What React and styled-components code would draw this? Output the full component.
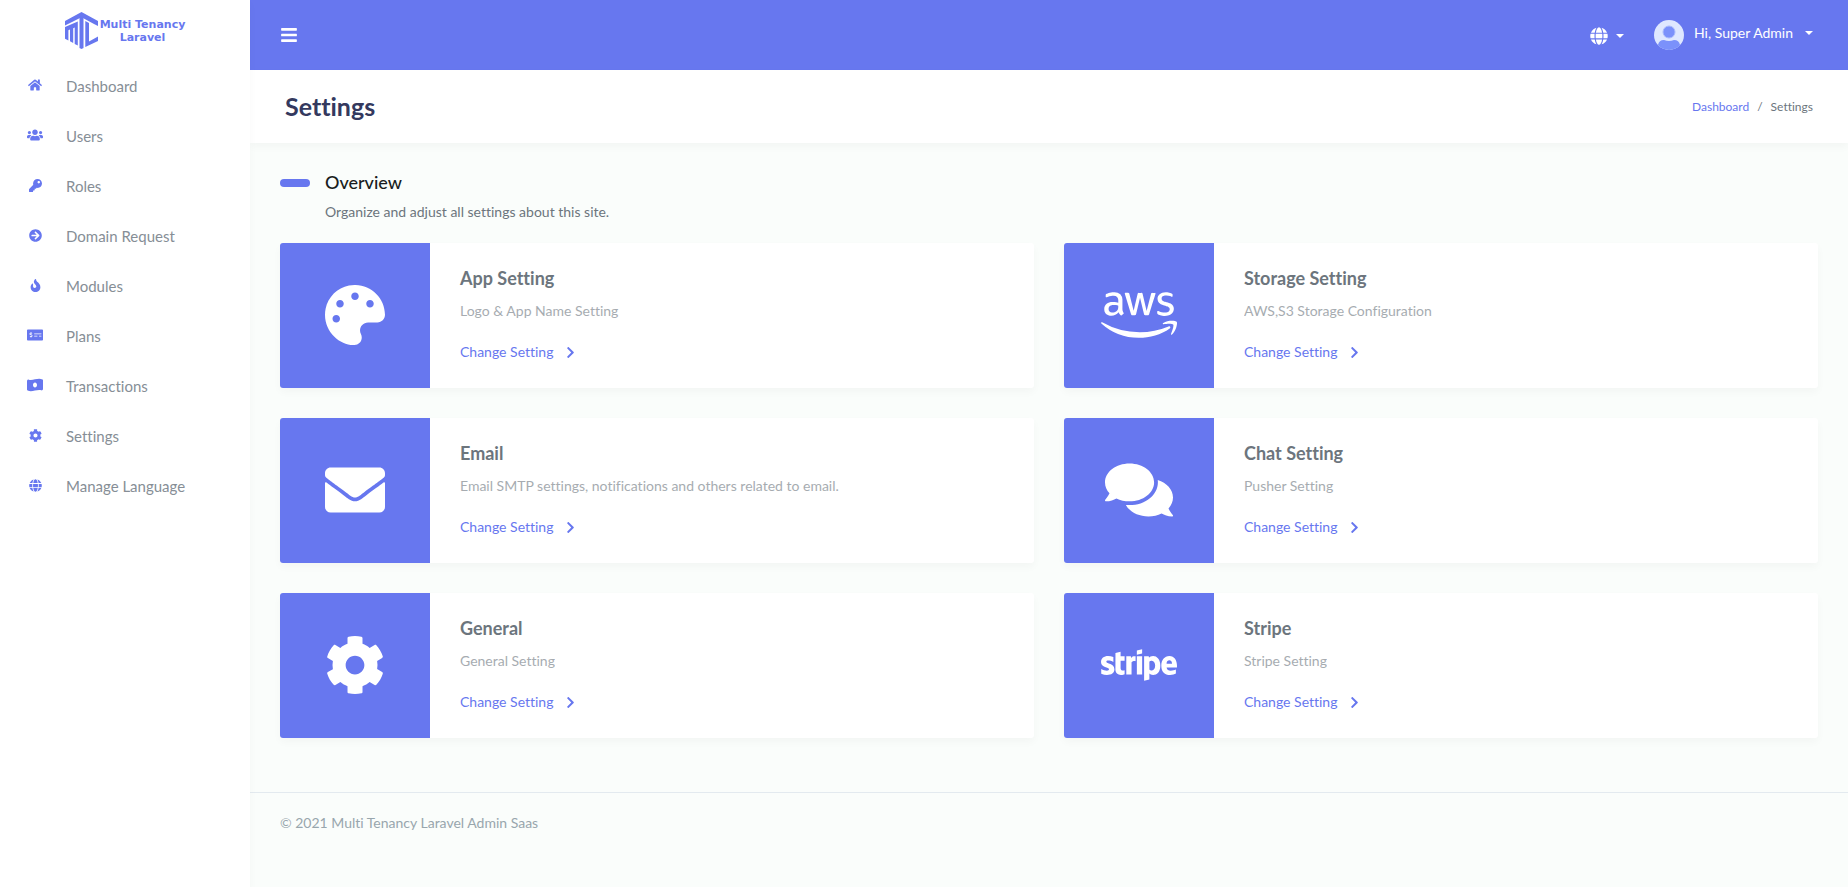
import React from "react";
import styled, { createGlobalStyle } from "styled-components";
import {
  FaHome, FaUsers, FaKey, FaArrowCircleRight, FaFire, FaMoneyCheckAlt,
  FaCog, FaGlobe, FaBars, FaPalette, FaAws, FaEnvelope, FaComments, FaStripe, FaChevronRight,
} from "react-icons/fa";

const primary = "#6777ef";

const GlobalStyle = createGlobalStyle`
  *, *::before, *::after { box-sizing: border-box; }
  body {
    margin: 0;
    background: #fafdfb;
    color: #6c757d;
    font-family: Lato, "Open Sans", sans-serif;
    font-size: 14px;
    font-variant-ligatures: none;
    line-height: 24px;
  }
  a { color: ${primary}; text-decoration: none; }
  h1, h2, h3, p, ul, ol { margin: 0; padding: 0; }
  ul, ol { list-style: none; }
  svg { display: block; flex-shrink: 0; }
  button { border: 0; padding: 0; background: none; font: inherit; font-variant-ligatures: none; cursor: pointer; }
`;

const Shell = styled.div`
  display: flex;
  min-height: 100vh;
`;

const Sidebar = styled.aside`
  position: relative;
  z-index: 2;
  flex: 0 0 250px;
  background: #fff;
  box-shadow: 0 4px 8px rgba(0, 0, 0, 0.03);
`;

const Brand = styled.a`
  display: flex;
  justify-content: center;
  gap: 2px;
  height: 61px;
  padding: 12px 0 0;
`;

const BrandName = styled.span`
  padding-top: 6px;
  font: bold 11px/13px "DejaVu Sans", sans-serif;
  text-align: center;
`;

const MenuLink = styled.a`
  display: flex;
  align-items: center;
  height: 50px;
  padding: 0 20px;
  gap: 16px;
  color: #868e96;
  font-size: 15px;
`;

const MenuIcon = styled.span`
  display: flex;
  justify-content: center;
  width: 30px;
  padding-bottom: 2px;
  color: ${primary};
`;

const Main = styled.div`
  flex: 1;
  min-width: 0;
`;

const Navbar = styled.header`
  display: flex;
  align-items: center;
  justify-content: space-between;
  height: 70px;
  padding: 0 35px 0 30px;
  background: ${primary};
  color: #fff;
`;

const NavButton = styled.button`
  display: flex;
  align-items: center;
  gap: 8px;
  color: #fff;
`;

const NavActions = styled.div`
  display: flex;
  align-items: center;
  gap: 30px;
`;

const LanguageButton = styled(NavButton)`
  padding-top: 2px;
`;

const Caret = styled.span`
  border-top: 4px solid currentColor;
  border-left: 4px solid transparent;
  border-right: 4px solid transparent;
`;

const UserLabel = styled.span`
  display: flex;
  align-items: center;
  gap: 12px;
  padding: 0 0 4px 2px;
`;

const TitleBar = styled.div`
  display: flex;
  align-items: center;
  justify-content: space-between;
  padding: 20px 35px;
  background: #fff;
  box-shadow: 0 4px 8px rgba(0, 0, 0, 0.03);
`;

const PageTitle = styled.h1`
  color: #34395e;
  font-size: 25px;
  line-height: 33px;
`;

const Crumbs = styled.ol`
  display: flex;
  gap: 8px;
  font-size: 12px;
`;

const Content = styled.main`
  padding: 28px 30px 54px;
`;

const SectionTitle = styled.h2`
  display: flex;
  align-items: center;
  gap: 15px;
  color: #191d21;
  font-size: 18px;
  font-weight: 500;
  line-height: 23px;

  &::before {
    content: "";
    width: 30px;
    height: 8px;
    border-radius: 5px;
    background: ${primary};
  }
`;

const SectionLead = styled.p`
  padding: 6px 0 19px 45px;
`;

const CardGrid = styled.div`
  display: grid;
  grid-template-columns: 1fr 1fr;
  gap: 30px;
`;

const Card = styled.article`
  display: flex;
  min-height: 145px;
  overflow: hidden;
  border-radius: 3px;
  background: #fff;
  box-shadow: 0 4px 8px rgba(0, 0, 0, 0.03);
`;

const CardIcon = styled.div`
  display: flex;
  align-items: center;
  justify-content: center;
  width: 150px;
  padding-bottom: 2px;
  background: ${primary};
  color: #fff;
`;

const CardBody = styled.div`
  padding: 23px 30px;
`;

const CardTitle = styled.h3`
  font-size: 18px;
`;

const CardText = styled.p`
  padding: 9px 0 17px;
  opacity: 0.6;
`;

const CardLink = styled.a`
  display: inline-flex;
  align-items: center;
  gap: 11px;
`;

const Footer = styled.footer`
  padding: 18px 30px;
  border-top: 1px solid #e3eaef;
  color: #98a6ad;
`;

const BanknoteIcon = ({ size }) => (
  <svg width={size} height={size} viewBox="0 0 640 512" fill="currentColor" aria-hidden="true">
    <path
      fillRule="evenodd"
      d="M621 33C577 11 532 3 487 3 376 3 265 52 154 52 126 52 99 49 71 42 67 41 63 40 59 40 27 40 0 65 0 98V437C0 454 9 471 24 478 67 499 108 509 153 509 264 509 375 460 487 460 514 460 541 463 569 470 573 471 577 472 581 472 613 472 640 447 640 414V65C640 52 633 39 621 33ZM320 352C276 352 240 309 240 256S276 160 320 160 400 203 400 256 364 352 320 352Z"
    />
  </svg>
);

const menu = [
  ["Dashboard", FaHome, 14],
  ["Users", FaUsers, 16],
  ["Roles", FaKey, 13],
  ["Domain Request", FaArrowCircleRight, 13],
  ["Modules", FaFire, 13],
  ["Plans", FaMoneyCheckAlt, 16],
  ["Transactions", BanknoteIcon, 16],
  ["Settings", FaCog, 13],
  ["Manage Language", FaGlobe, 13],
];

const cards = [
  ["App Setting", "Logo & App Name Setting", FaPalette, 60],
  ["Storage Setting", "AWS,S3 Storage Configuration", FaAws, 76],
  ["Email", "Email SMTP settings, notifications and others related to email.", FaEnvelope, 60],
  ["Chat Setting", "Pusher Setting", FaComments, 68],
  ["General", "General Setting", FaCog, 60],
  ["Stripe", "Stripe Setting", FaStripe, 76],
];

const Logo = () => (
  <svg width="33" height="37" viewBox="0 0 33 37" fill={primary} aria-hidden="true">
    <path d="M0 9 16.500 0 33 9V14L29 12 16.500 5.200 4 11.500 0 13.500Z" />
    <path d="M0 15 12.800 9.500V33.500L9.700 32V15.500L8.200 16.200V31L5 29.300V17.500L3.400 18.200V28.500L0 26.700Z" />
    <path d="M14.500 5H18.500V36L16.500 37 14.500 36Z" />
    <path d="M20.300 9 24 11V29.500L33 24.500V29L20.300 35Z" />
  </svg>
);

const Avatar = () => (
  <svg width="30" height="30" viewBox="0 0 30 30" aria-hidden="true">
    <defs>
      <clipPath id="avatar-circle"><circle cx="15" cy="15" r="15" /></clipPath>
    </defs>
    <g clipPath="url(#avatar-circle)">
      <rect width="30" height="30" fill="#dfe8ff" />
      <circle cx="15" cy="12" r="6" fill="#7b91fb" stroke="#a9bafc" />
      <path d="M4 30V25Q5 20 10 20Q15 22 20 20Q25 20 26 25V30Z" fill="#7b91fb" />
    </g>
  </svg>
);

export default function App() {
  return (
    <>
      <GlobalStyle />
      <Shell>
        <Sidebar>
          <Brand href="#">
            <Logo />
            <BrandName>Multi Tenancy<br />Laravel</BrandName>
          </Brand>
          <nav aria-label="Main menu">
            <ul>
              {menu.map(([label, Icon, size]) => (
                <li key={label}>
                  <MenuLink href="#">
                    <MenuIcon><Icon size={size} /></MenuIcon>
                    {label}
                  </MenuLink>
                </li>
              ))}
            </ul>
          </nav>
        </Sidebar>
        <Main>
          <Navbar>
            <NavButton aria-label="Toggle sidebar"><FaBars size={18} /></NavButton>
            <NavActions>
              <LanguageButton aria-label="Language"><FaGlobe size={18} /><Caret /></LanguageButton>
              <NavButton>
                <Avatar />
                <UserLabel>Hi, Super Admin <Caret /></UserLabel>
              </NavButton>
            </NavActions>
          </Navbar>
          <TitleBar>
            <PageTitle>Settings</PageTitle>
            <nav aria-label="Breadcrumb">
              <Crumbs>
                <li><a href="#">Dashboard</a></li>
                <li aria-hidden="true">/</li>
                <li>Settings</li>
              </Crumbs>
            </nav>
          </TitleBar>
          <Content>
            <SectionTitle>Overview</SectionTitle>
            <SectionLead>Organize and adjust all settings about this site.</SectionLead>
            <CardGrid>
              {cards.map(([title, text, Icon, size]) => (
                <Card key={title}>
                  <CardIcon><Icon size={size} /></CardIcon>
                  <CardBody>
                    <CardTitle>{title}</CardTitle>
                    <CardText>{text}</CardText>
                    <CardLink href="#">Change Setting <FaChevronRight size={13} /></CardLink>
                  </CardBody>
                </Card>
              ))}
            </CardGrid>
          </Content>
          <Footer>© 2021 Multi Tenancy Laravel Admin Saas</Footer>
        </Main>
      </Shell>
    </>
  );
}
